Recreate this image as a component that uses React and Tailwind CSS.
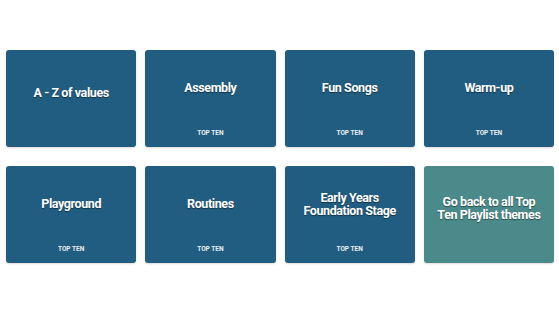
import React from 'react';

const themes = [
  { title: 'A - Z of values', tag: false },
  { title: 'Assembly', tag: true },
  { title: 'Fun Songs', tag: true },
  { title: 'Warm-up', tag: true },
  { title: 'Playground', tag: true },
  { title: 'Routines', tag: true },
  { title: 'Early Years Foundation Stage', tag: true },
];

function ThemeCard({ title, tag }) {
  return (
    <div className="h-[97px] rounded-[3px] bg-[#215d80] flex flex-col shadow-[0_1px_2px_rgba(0,0,0,0.15)]">
      <div className="flex-1 flex items-center justify-center px-3">
        <h3 className="text-center text-[12.5px] leading-[13px] tracking-[-0.4px] font-bold text-white [text-shadow:0_1px_1px_rgba(0,0,0,0.45)]">
          {title}
        </h3>
      </div>
      {tag ? (
        <p className="pt-[4px] pb-[10px] text-center text-[6.5px] leading-[8px] font-bold uppercase text-white/90">
          Top Ten
        </p>
      ) : (
        <div className="h-[13px]" />
      )}
    </div>
  );
}

export default function App() {
  return (
    <div className="min-h-screen bg-white pt-[50px] pl-[6px] pr-[5px] font-['Roboto','Liberation_Sans',sans-serif]">
      <div className="grid grid-cols-4 gap-x-[9px] gap-y-[19px]">
        {themes.map((t) => (
          <ThemeCard key={t.title} title={t.title} tag={t.tag} />
        ))}

        {/* Link back to all themes */}
        <div className="h-[97px] rounded-[3px] bg-[#4b8a8a] flex flex-col shadow-[0_1px_2px_rgba(0,0,0,0.15)]">
          <div className="flex-1 flex items-center justify-center px-3">
            <h3 className="text-center text-[12.5px] leading-[13px] tracking-[-0.4px] font-bold text-white [text-shadow:0_1px_1px_rgba(0,0,0,0.45)]">
              Go back to all Top Ten Playlist themes
            </h3>
          </div>
          <div className="h-[13px]" />
        </div>
      </div>
    </div>
  );
}
